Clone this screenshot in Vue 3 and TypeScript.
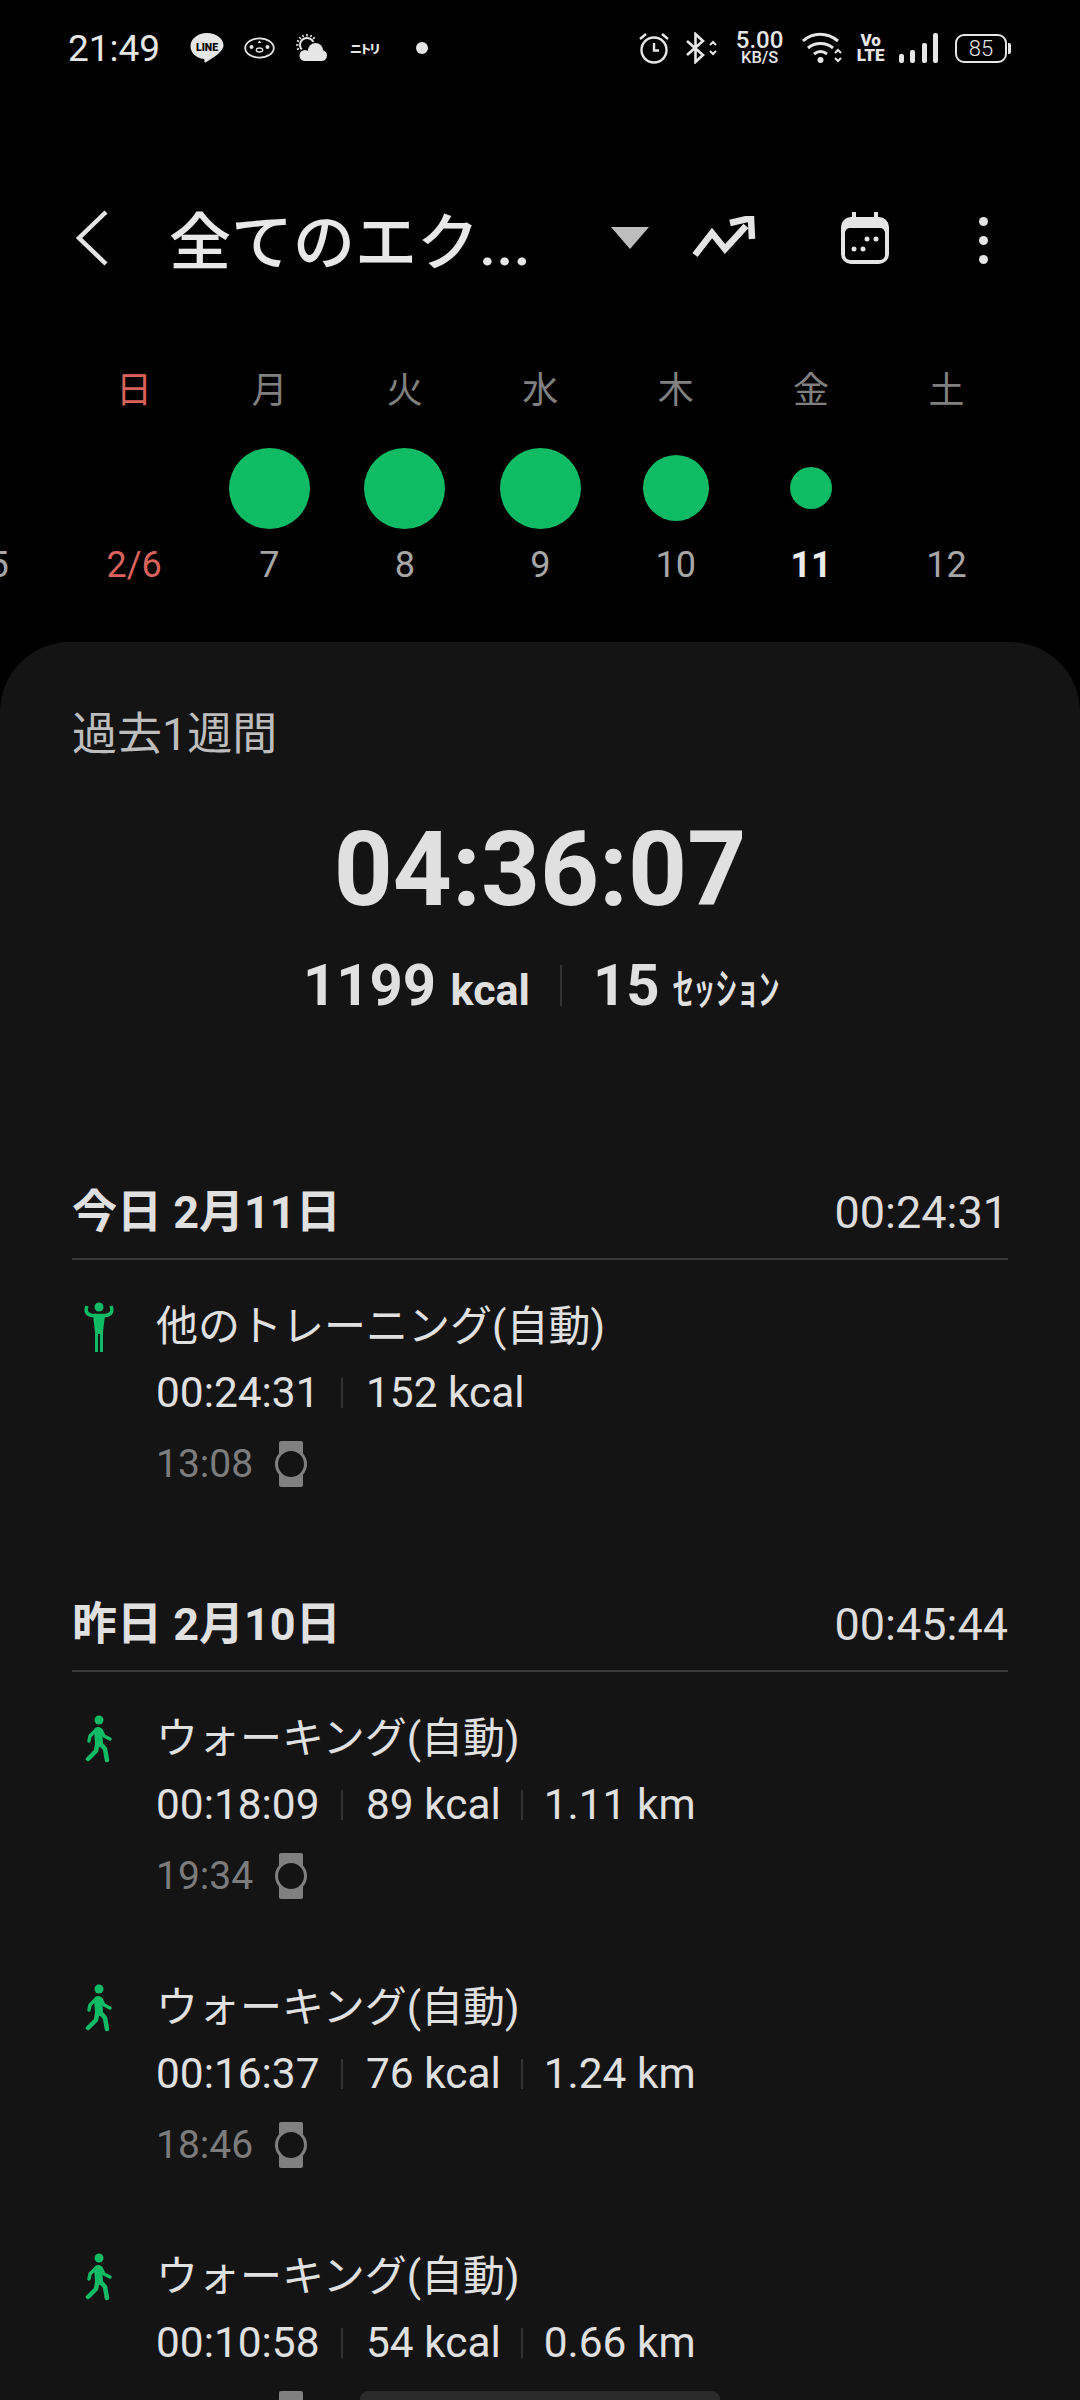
<script setup lang="ts">
interface Day { label: string; date: string; size: number; kind?: string }
interface Session { kind: 'other' | 'walk'; title: string; stats: string[]; time: string }
interface Section { title: string; total: string; items: Session[] }

const days: Day[] = [
  { label: '', date: '5', size: 0 },
  { label: '日', date: '2/6', size: 0, kind: 'sun' },
  { label: '月', date: '7', size: 81 },
  { label: '火', date: '8', size: 81 },
  { label: '水', date: '9', size: 81 },
  { label: '木', date: '10', size: 66 },
  { label: '金', date: '11', size: 42, kind: 'today' },
  { label: '土', date: '12', size: 0 },
]

const sections: Section[] = [
  {
    title: '今日 2月11日',
    total: '00:24:31',
    items: [{ kind: 'other', title: '他のトレーニング(自動)', stats: ['00:24:31', '152 kcal'], time: '13:08' }],
  },
  {
    title: '昨日 2月10日',
    total: '00:45:44',
    items: [
      { kind: 'walk', title: 'ウォーキング(自動)', stats: ['00:18:09', '89 kcal', '1.11 km'], time: '19:34' },
      { kind: 'walk', title: 'ウォーキング(自動)', stats: ['00:16:37', '76 kcal', '1.24 km'], time: '18:46' },
      { kind: 'walk', title: 'ウォーキング(自動)', stats: ['00:10:58', '54 kcal', '0.66 km'], time: '' },
    ],
  },
]
</script>

<template>
  <div class="page">
    <div class="status">
      <div class="status-left">
        <span class="clock">21:49</span>
        <svg class="s-line" width="34" height="32" viewBox="0 0 34 32">
          <path d="M17 1C7.600 1 .5 7 .5 14.200c0 6.500 5.600 11.800 13.200 12.900.8.200.9 1 .7 2.200-.1.9.5 1.500 1.400.9 3-1.800 13-7.400 16-12.500 1.200-1.700 1.700-2.900 1.700-4.500C33.500 7 26.400 1 17 1z" fill="#e6e6e6"/>
          <text x="17" y="18.500" class="line-text" text-anchor="middle">LINE</text>
        </svg>
        <svg class="s-peng" width="31" height="22" viewBox="0 0 31 22">
          <ellipse cx="15.500" cy="11" rx="14.300" ry="9.600" fill="none" stroke="#e6e6e6" stroke-width="1.800"/>
          <path d="M15.500 3.500l-2 2.500h4z" fill="#e6e6e6"/>
          <circle cx="7.500" cy="10" r="2" fill="#e6e6e6"/><circle cx="23.500" cy="10" r="2" fill="#e6e6e6"/>
          <ellipse cx="15.500" cy="13" rx="3.200" ry="2" fill="none" stroke="#e6e6e6" stroke-width="1.300"/>
        </svg>
        <svg class="s-wx" width="31" height="28" viewBox="0 0 31 28">
          <circle cx="11" cy="11" r="7" fill="none" stroke="#e6e6e6" stroke-width="2"/>
          <path d="M11 0v2.500M0 11h2.500M3.200 3.200l1.700 1.700M18.800 3.200l-1.700 1.700M3.200 18.800l1.700-1.700M1 6.500l2 1M1 15.500l2-1M6.500 1l1 2M15.500 1l-1 2" stroke="#e6e6e6" stroke-width="1.600"/>
          <g fill="#000" stroke="#000" stroke-width="3">
            <circle cx="19.500" cy="16.500" r="7.500"/><circle cx="9" cy="21.500" r="5.500"/><circle cx="25.500" cy="21.500" r="5.500"/>
          </g>
          <g fill="#e6e6e6">
            <circle cx="19.500" cy="16.500" r="7.500"/><circle cx="9" cy="21.500" r="5.500"/><circle cx="25.500" cy="21.500" r="5.500"/><rect x="9" y="18" width="16" height="9"/>
          </g>
        </svg>
        <span class="nitori">ニトリ</span>
        <span class="dot"></span>
      </div>
      <div class="status-right">
        <svg width="30" height="32" viewBox="0 0 30 32">
          <circle cx="15" cy="18" r="12.500" fill="none" stroke="#e6e6e6" stroke-width="2.400"/>
          <path d="M15 11v7.500h5M1 7l6-5M29 7l-6-5" fill="none" stroke="#e6e6e6" stroke-width="2.400"/>
        </svg>
        <svg width="31" height="32" viewBox="0 0 31 32">
          <path d="M1 9l16 14-7.500 7V2L17 9 1 23" fill="none" stroke="#e6e6e6" stroke-width="2.600"/>
          <path d="M24 13l3-3 3 3M24 19l3 3 3-3" fill="none" stroke="#e6e6e6" stroke-width="2"/>
        </svg>
        <div class="speed"><span class="speed-n">5.00</span><span class="speed-u">KB/S</span></div>
        <svg width="40" height="32" viewBox="0 0 40 32">
          <path d="M1 9c10-9 24-9 35 0M6 16c7-6 18-6 25 0M12 22c4-3 9-3 13 0" fill="none" stroke="#e6e6e6" stroke-width="3"/>
          <circle cx="18.500" cy="28" r="3" fill="#e6e6e6"/>
          <path d="M33 21l3-3 3 3M33 26l3 3 3-3" fill="none" stroke="#e6e6e6" stroke-width="2"/>
        </svg>
        <div class="volte"><span>Vo</span><span>LTE</span></div>
        <div class="signal"><i class="b1"></i><i class="b2"></i><i class="b3"></i><i class="b4"></i></div>
        <div class="battery"><div class="batt-body">85</div><div class="batt-cap"></div></div>
      </div>
    </div>

    <div class="toolbar">
      <svg class="back" width="36" height="56" viewBox="0 0 36 56">
        <path d="M32 2L5 28l27 26" fill="none" stroke="#e4e4e4" stroke-width="4.500"/>
      </svg>
      <span class="heading">全てのエク...</span>
      <span class="tri"></span>
      <svg class="trend" width="64" height="44" viewBox="0 0 64 44">
        <path d="M3 39L20 17l13 16L54 10M38 7l21-5 1 21" fill="none" stroke="#e4e4e4" stroke-width="6.500"/>
      </svg>
      <svg class="cal" width="50" height="54" viewBox="0 0 50 54">
        <path d="M14 1v8M36 1v8" stroke="#e4e4e4" stroke-width="4"/>
        <rect x="1" y="6" width="48" height="47" rx="10" fill="#e4e4e4"/>
        <rect x="5" y="17" width="40" height="32" rx="5" fill="#000"/>
        <circle cx="14" cy="38" r="2.500" fill="#e4e4e4"/><circle cx="23" cy="38" r="2.500" fill="#e4e4e4"/>
        <circle cx="27" cy="28" r="2.500" fill="#e4e4e4"/><circle cx="36" cy="28" r="2.500" fill="#e4e4e4"/>
      </svg>
      <div class="kebab"><i></i><i></i><i></i></div>
    </div>

    <div class="week">
      <div v-for="d in days" :key="d.date" class="day" :class="d.kind">
        <div class="wd">{{ d.label }}</div>
        <div class="bubble-row">
          <span v-if="d.size" class="bubble" :style="{ width: d.size + 'px', height: d.size + 'px' }"></span>
        </div>
        <div class="dt">{{ d.date }}</div>
      </div>
    </div>

    <div class="sheet">
      <div class="period">過去1週間</div>
      <div class="bigtime">04:36:07</div>
      <div class="summary">
        <span class="sum-n">1199</span><span class="sum-u">kcal</span>
        <span class="sum-div"></span>
        <span class="sum-n">15</span><span class="sum-u kana">ｾｯｼｮﾝ</span>
      </div>

      <section v-for="s in sections" :key="s.title" class="section">
        <div class="sec-head">
          <span class="sec-title">{{ s.title }}</span>
          <span class="sec-total">{{ s.total }}</span>
        </div>
        <div v-for="it in s.items" :key="it.stats[0]" class="item">
          <div class="item-title" :class="it.kind">
            <svg v-if="it.kind === 'other'" class="ic-other" width="30" height="50" viewBox="0 0 30 50">
              <circle cx="15" cy="5" r="4.500" fill="#10bb66"/>
              <path d="M3 4Q0 12 8 13.500H22Q30 12 27 4" fill="none" stroke="#10bb66" stroke-width="3.500"/>
              <path d="M9 13H21L19 30V50H16V32H14V50H11V30Z" fill="#10bb66"/>
            </svg>
            <svg v-else class="ic-walk" width="28" height="48" viewBox="0 0 28 48">
              <circle cx="14" cy="5" r="4.500" fill="#10bb66"/>
              <path d="M13 16L14 28" stroke="#10bb66" stroke-width="8" stroke-linecap="round"/>
              <path d="M10 16L5 21L4 26M16 15L19 21L25 24" fill="none" stroke="#10bb66" stroke-width="3.500" stroke-linecap="round" stroke-linejoin="round"/>
              <path d="M15 28L20 34L22 45M12 30L11 36L3 44" fill="none" stroke="#10bb66" stroke-width="4.500" stroke-linecap="round" stroke-linejoin="round"/>
            </svg>
            <span>{{ it.title }}</span>
          </div>
          <div class="item-stats">
            <template v-for="(st, i) in it.stats" :key="st">
              <span v-if="i" class="st-div" :class="{ tight: i === 2 }"></span>
              <span>{{ st }}</span>
            </template>
          </div>
          <div class="item-time">
            <span class="time-txt">{{ it.time }}</span>
            <svg width="34" height="46" viewBox="0 0 34 46">
              <rect x="5" y="0" width="24" height="46" rx="2" fill="#808080"/>
              <circle cx="17" cy="23" r="14.500" fill="#141414" stroke="#808080" stroke-width="3"/>
            </svg>
          </div>
        </div>
      </section>
    </div>
    <div class="pill"></div>
  </div>
</template>

<style>
html, body { margin: 0; background: #000; }
</style>

<style scoped>
.page {
  position: relative;
  width: 1080px;
  height: 2400px;
  overflow: hidden;
  background: #000;
  color: #e0e0e0;
  font-family: Roboto, "Noto Sans CJK JP", sans-serif;
}
.status {
  height: 96px;
  box-sizing: border-box;
  padding: 0 69px 0 68px;
  display: flex;
  align-items: center;
  justify-content: space-between;
}
.status-left, .status-right { display: flex; align-items: center; }
.status-right { gap: 17px; }
.clock { width: 88px; font-size: 37px; color: #e6e6e6; white-space: nowrap; }
.s-line { margin-left: 34px; }
.s-peng { margin-left: 20px; }
.s-wx { margin-left: 21px; }
.line-text { font: 900 10.500px Roboto, sans-serif; fill: #000; }
.nitori { margin-left: 23px; width: 28px; font: 900 12px "Noto Sans CJK JP", sans-serif; color: #e6e6e6; white-space: nowrap; letter-spacing: -2.500px; }
.dot { margin-left: 38px; width: 12px; height: 12px; border-radius: 50%; background: #e6e6e6; }
.speed { width: 51px; display: flex; flex-direction: column; align-items: center; color: #e6e6e6; line-height: 1; }
.speed-n { font-size: 24px; font-weight: 500; line-height: 20px; }
.speed-u { font-size: 16.500px; font-weight: 500; line-height: 16px; }
.volte { width: 23px; display: flex; flex-direction: column; align-items: center; font-size: 17px; font-weight: 900; line-height: 15px; color: #e6e6e6; }
.signal { display: flex; align-items: flex-end; gap: 6.300px; height: 30px; }
.signal i { display: block; width: 5px; border-radius: 2px; background: #e6e6e6; }
.b1 { height: 9px; } .b2 { height: 13px; } .b3 { height: 20px; } .b4 { height: 30px; }
.battery { display: flex; align-items: center; }
.batt-body { width: 48px; height: 25px; border: 2.500px solid #e6e6e6; border-radius: 9px; font-size: 22px; font-weight: 300; line-height: 25px; text-align: center; color: #e6e6e6; }
.batt-cap { width: 3px; height: 11px; margin-left: 1px; background: #e6e6e6; border-radius: 0 2px 2px 0; }

.toolbar {
  margin-top: 92px;
  height: 100px;
  display: flex;
  align-items: center;
}
.back { margin-left: 74px; }
.heading { margin-left: 59px; width: 442px; font-size: 62px; font-weight: 500; color: #e8e8e8; white-space: nowrap; }
.tri { width: 0; height: 0; border-left: 19px solid transparent; border-right: 19px solid transparent; border-top: 22px solid #bdbdbd; }
.trend { margin-left: 43px; }
.cal { margin-left: 84px; }
.kebab { margin-left: 89px; margin-top: 4px; display: flex; flex-direction: column; gap: 10px; }
.kebab i { display: block; width: 9px; height: 9px; border-radius: 50%; background: #e4e4e4; }

.week {
  margin-top: 78px;
  margin-left: -69px;
  display: flex;
}
.day { width: 135.400px; flex: none; display: flex; flex-direction: column; align-items: center; }
.wd { height: 50px; line-height: 50px; font-size: 36px; color: #808080; }
.bubble-row { margin-top: 27px; height: 90px; display: flex; align-items: center; justify-content: center; }
.bubble { display: block; border-radius: 50%; background: #10bb66; }
.dt { margin-top: 7px; height: 50px; line-height: 50px; font-size: 36px; color: #a6a6a6; }
.sun .wd, .sun .dt { color: #d9625a; }
.today .dt { color: #ececec; font-weight: 700; }

.sheet {
  margin-top: 52px;
  background: #141414;
  border-radius: 70px 70px 0 0;
  padding: 63px 72px 0;
  height: 1758px;
  box-sizing: border-box;
}
.period { height: 60px; line-height: 60px; font-size: 45px; color: #bdbdbd; }
.bigtime { margin-top: 45px; height: 120px; line-height: 120px; font-size: 103px; font-weight: 700; text-align: center; color: #e0e0e0; }
.summary { margin-top: 25px; padding-left: 3px; height: 60px; display: flex; align-items: baseline; justify-content: center; line-height: 60px; font-weight: 700; color: #e0e0e0; }
.sum-n { font-size: 58px; }
.sum-u { margin-left: 14.500px; font-size: 43px; }
.kana { font-weight: 500; margin-left: 13px; font-size: 43px; }
.sum-div { align-self: center; margin: 0 31px 0 30px; width: 2px; height: 41px; background: #333; }

.section { margin-top: 168px; }
.section + .section { margin-top: 66.500px; }
.sec-head { height: 60px; padding-bottom: 14.500px; border-bottom: 2px solid #3a3a3a; display: flex; justify-content: space-between; align-items: center; line-height: 60px; }
.sec-title { font-size: 45px; font-weight: 700; }
.sec-total { font-size: 45px; color: #dcdcdc; }
.item { padding-top: 37.500px; padding-bottom: 39.500px; }
.item-title { height: 60px; display: flex; align-items: center; font-size: 42px; line-height: 60px; color: #e0e0e0; white-space: nowrap; }
.ic-other { margin-left: 12px; margin-right: 42px; }
.ic-walk { margin-left: 13px; margin-right: 43px; }
.item-stats { margin-top: 6px; margin-left: 84px; height: 60px; display: flex; align-items: center; font-size: 42.400px; line-height: 60px; }
.st-div { width: 2px; height: 30px; margin: 0 22.500px 0 22px; background: #333; }
.st-div.tight { margin: 0 21px 0 20px; }
.item-time { margin-top: 16px; margin-left: 84px; height: 50px; display: flex; align-items: center; font-size: 39px; color: #7c7c7c; }
.time-txt { width: 118px; }
.pill { position: absolute; left: 360px; top: 2391px; width: 360px; height: 20px; border-radius: 8px; background: #2a2a2a; }
</style>
